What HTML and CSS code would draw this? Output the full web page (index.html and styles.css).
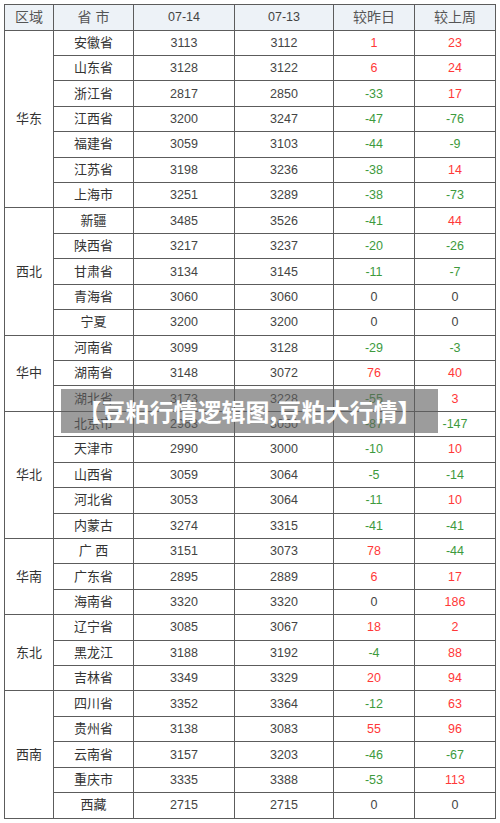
FILE: index.html
```html
<!DOCTYPE html>
<html lang="zh">
<head>
<meta charset="utf-8">
<link rel="stylesheet" href="styles.css">
</head>
<body>
<div class="wrap">
<table class="tbl">
<colgroup><col class="c1"><col class="c2"><col class="c3"><col class="c4"><col class="c5"><col class="c6"></colgroup>
<thead>
<tr class="head"><th>区域</th><th>省 市</th><th class="num">07-14</th><th class="num">07-13</th><th>较昨日</th><th>较上周</th></tr>
</thead>
<tbody>
<tr><td class="reg" rowspan="7">华东</td><td>安徽省</td><td class="num">3113</td><td class="num">3112</td><td class="num up">1</td><td class="num up">23</td></tr>
<tr><td>山东省</td><td class="num">3128</td><td class="num">3122</td><td class="num up">6</td><td class="num up">24</td></tr>
<tr><td>浙江省</td><td class="num">2817</td><td class="num">2850</td><td class="num dn">-33</td><td class="num up">17</td></tr>
<tr><td>江西省</td><td class="num">3200</td><td class="num">3247</td><td class="num dn">-47</td><td class="num dn">-76</td></tr>
<tr><td>福建省</td><td class="num">3059</td><td class="num">3103</td><td class="num dn">-44</td><td class="num dn">-9</td></tr>
<tr><td>江苏省</td><td class="num">3198</td><td class="num">3236</td><td class="num dn">-38</td><td class="num up">14</td></tr>
<tr><td>上海市</td><td class="num">3251</td><td class="num">3289</td><td class="num dn">-38</td><td class="num dn">-73</td></tr>

<tr><td class="reg" rowspan="5">西北</td><td>新疆</td><td class="num">3485</td><td class="num">3526</td><td class="num dn">-41</td><td class="num up">44</td></tr>
<tr><td>陕西省</td><td class="num">3217</td><td class="num">3237</td><td class="num dn">-20</td><td class="num dn">-26</td></tr>
<tr><td>甘肃省</td><td class="num">3134</td><td class="num">3145</td><td class="num dn">-11</td><td class="num dn">-7</td></tr>
<tr><td>青海省</td><td class="num">3060</td><td class="num">3060</td><td class="num">0</td><td class="num">0</td></tr>
<tr><td>宁夏</td><td class="num">3200</td><td class="num">3200</td><td class="num">0</td><td class="num">0</td></tr>

<tr><td class="reg" rowspan="3">华中</td><td>河南省</td><td class="num">3099</td><td class="num">3128</td><td class="num dn">-29</td><td class="num dn">-3</td></tr>
<tr><td>湖南省</td><td class="num">3148</td><td class="num">3072</td><td class="num up">76</td><td class="num up">40</td></tr>
<tr><td>湖北省</td><td class="num">3173</td><td class="num">3228</td><td class="num dn">-55</td><td class="num up">3</td></tr>

<tr><td class="reg" rowspan="5">华北</td><td>北京市</td><td class="num">2963</td><td class="num">3050</td><td class="num dn">-87</td><td class="num dn">-147</td></tr>
<tr><td>天津市</td><td class="num">2990</td><td class="num">3000</td><td class="num dn">-10</td><td class="num up">10</td></tr>
<tr><td>山西省</td><td class="num">3059</td><td class="num">3064</td><td class="num dn">-5</td><td class="num dn">-14</td></tr>
<tr><td>河北省</td><td class="num">3053</td><td class="num">3064</td><td class="num dn">-11</td><td class="num up">10</td></tr>
<tr><td>内蒙古</td><td class="num">3274</td><td class="num">3315</td><td class="num dn">-41</td><td class="num dn">-41</td></tr>

<tr><td class="reg" rowspan="3">华南</td><td>广 西</td><td class="num">3151</td><td class="num">3073</td><td class="num up">78</td><td class="num dn">-44</td></tr>
<tr><td>广东省</td><td class="num">2895</td><td class="num">2889</td><td class="num up">6</td><td class="num up">17</td></tr>
<tr><td>海南省</td><td class="num">3320</td><td class="num">3320</td><td class="num">0</td><td class="num up">186</td></tr>

<tr><td class="reg" rowspan="3">东北</td><td>辽宁省</td><td class="num">3085</td><td class="num">3067</td><td class="num up">18</td><td class="num up">2</td></tr>
<tr><td>黑龙江</td><td class="num">3188</td><td class="num">3192</td><td class="num dn">-4</td><td class="num up">88</td></tr>
<tr><td>吉林省</td><td class="num">3349</td><td class="num">3329</td><td class="num up">20</td><td class="num up">94</td></tr>

<tr><td class="reg" rowspan="5">西南</td><td>四川省</td><td class="num">3352</td><td class="num">3364</td><td class="num dn">-12</td><td class="num up">63</td></tr>
<tr><td>贵州省</td><td class="num">3138</td><td class="num">3083</td><td class="num up">55</td><td class="num up">96</td></tr>
<tr><td>云南省</td><td class="num">3157</td><td class="num">3203</td><td class="num dn">-46</td><td class="num dn">-67</td></tr>
<tr><td>重庆市</td><td class="num">3335</td><td class="num">3388</td><td class="num dn">-53</td><td class="num up">113</td></tr>
<tr><td>西藏</td><td class="num">2715</td><td class="num">2715</td><td class="num">0</td><td class="num">0</td></tr>
</tbody>
</table>
<div class="banner">【豆粕行情逻辑图,豆粕大行情】</div>
</div>
</body>
</html>
```

FILE: styles.css
```css
html, body {
  margin: 0;
  padding: 0;
  background: #ffffff;
}
.wrap {
  position: relative;
  width: 500px;
  height: 823px;
}
.tbl {
  position: relative;
  top: 4px;
  left: 4px;
  border-collapse: collapse;
  table-layout: fixed;
  width: 491px;
  font-family: "Liberation Sans", "Noto Sans CJK SC", sans-serif;
  font-size: 13px;
  color: #333333;
}
.c1 { width: 49px; }
.c2 { width: 80px; }
.c3 { width: 101px; }
.c4 { width: 99px; }
.c5 { width: 81px; }
.c6 { width: 81px; }
.tbl th, .tbl td {
  border: 1px solid #5c5c5c;
  padding: 0;
  text-align: center;
  vertical-align: middle;
  line-height: 14px;
  white-space: nowrap;
  overflow: hidden;
}
.head {
  height: 25.5px;
}
.head th {
  background: #edf2f7;
  font-weight: normal;
  font-size: 14px;
  color: #555555;
}
.tbl tbody tr {
  height: 25.43px;
}
.num {
  font-size: 12.5px;
  color: #444444;
}
.head th.num {
  font-size: 12.5px;
  color: #444444;
}
.up { color: #ff3838; }
.dn { color: #3d9a3d; }
.reg {
  font-size: 13px;
  color: #333333;
}
.banner {
  position: absolute;
  left: 61px;
  top: 389px;
  width: 377px;
  height: 44px;
  background: rgba(96, 96, 96, 0.62);
  color: #ffffff;
  font-family: "Noto Sans CJK SC", sans-serif;
  font-weight: 700;
  font-size: 24px;
  line-height: 44px;
  text-align: center;
  white-space: nowrap;
}
```
